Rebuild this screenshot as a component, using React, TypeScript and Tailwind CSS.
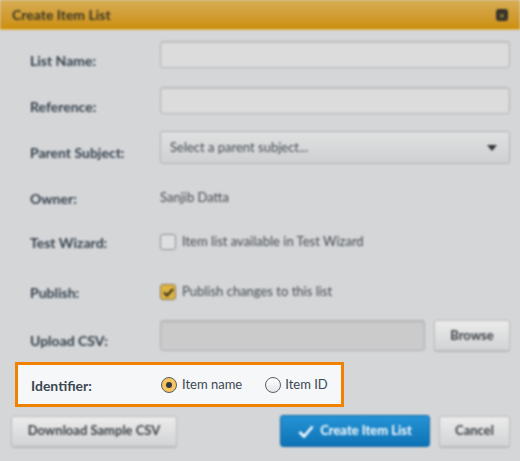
import React from "react";

const font = { fontFamily: "Lato, 'Open Sans', 'Liberation Sans', sans-serif" };

function Label({ children, pt = "pt-3" }: { children: React.ReactNode; pt?: string }) {
  return (
    <div className={`w-[130px] shrink-0 text-[14px] font-bold text-[#33404b] ${pt}`}>{children}</div>
  );
}

function Btn({ children, className = "" }: { children: React.ReactNode; className?: string }) {
  return (
    <div
      className={`flex items-center justify-center rounded-[3px] border border-[#b9bbbd] bg-gradient-to-b from-[#ececec] to-[#d2d3d5] text-[13px] font-bold text-[#3a3f44] shadow-[0_1px_1px_rgba(0,0,0,0.15)] ${className}`}
    >
      {children}
    </div>
  );
}

export default function App() {
  return (
    <div style={font} className="w-[520px] h-[461px] overflow-hidden bg-[#d5d6d8] flex flex-col">
      <div className="blur-[1.2px] flex flex-col">
        {/* Header */}
        <div className="h-[30px] flex items-center justify-between pl-3 pr-[12px] bg-gradient-to-b from-[#d7ad52] to-[#cc8f02] border-b border-[#e0b860]">
          <span className="text-[14px] font-bold text-[#3a3622]">Create Item List</span>
          <span className="w-[12px] h-[12px] rounded-[3px] bg-[#34322a] flex items-center justify-center text-[10px] leading-none text-[#b99040] font-bold">×</span>
        </div>
        <div className="flex flex-col pl-[30px] pr-[10px]">
          <div className="flex items-center h-[27px] mt-[11px]">
            <Label>List Name:</Label>
            <div className="flex-1 h-full rounded-[3px] border border-[#b3b5b8] bg-[#dcdcdc] shadow-[inset_0_1px_2px_rgba(0,0,0,0.1)]" />
          </div>
          <div className="flex items-center h-[27px] mt-[19px]">
            <Label>Reference:</Label>
            <div className="flex-1 h-full rounded-[3px] border border-[#b3b5b8] bg-[#dcdcdc] shadow-[inset_0_1px_2px_rgba(0,0,0,0.1)]" />
          </div>
          <div className="flex items-center h-[33px] mt-[17px]">
            <Label pt="pt-[9px]">Parent Subject:</Label>
            <div className="flex-1 h-full rounded-[3px] border border-[#b0b2b5] bg-gradient-to-b from-[#dfe0e0] to-[#d0d1d3] flex items-center justify-between pl-[9px] pr-[12px] text-[13px] text-[#444a50]">
              <span>Select a parent subject...</span>
              <svg width="10" height="6" viewBox="0 0 10 6"><path d="M0 0h10L5 6z" fill="#2f3337" /></svg>
            </div>
          </div>
          <div className="flex items-center h-[32px] mt-[18px]">
            <Label pt="pt-0">Owner:</Label>
            <span className="text-[13px] text-[#444a50]">Sanjib Datta</span>
          </div>
          <div className="flex items-center h-[32px] mt-[12px]">
            <Label pt="pt-0">Test Wizard:</Label>
            <div className="w-[16px] h-[16px] rounded-[3px] border border-[#8a8d91] bg-[#dedfe0] mr-[6px]" />
            <span className="text-[13px] text-[#444a50]">Item list available in Test Wizard</span>
          </div>
          <div className="flex items-center h-[32px] mt-[18px]">
            <Label pt="pt-0">Publish:</Label>
            <div className="w-[16px] h-[16px] rounded-[3px] border border-[#8a7a4a] bg-[#dfb342] mr-[6px] flex items-center justify-center">
              <svg width="11" height="9" viewBox="0 0 11 9"><path d="M1 4.5l3 3L10 1" stroke="#2d2a20" strokeWidth="2" fill="none" /></svg>
            </div>
            <span className="text-[13px] text-[#444a50]">Publish changes to this list</span>
          </div>
          <div className="flex items-center h-[31px] mt-[12px]">
            <Label pt="pt-[10px]">Upload CSV:</Label>
            <div className="w-[265px] h-full rounded-[3px] border border-[#b0b2b5] bg-[#cbcbcc] shadow-[inset_0_1px_2px_rgba(0,0,0,0.1)]" />
            <Btn className="ml-[9px] flex-1 h-[31px]">Browse</Btn>
          </div>
        </div>
      </div>

      {/* Identifier highlight */}
      <div className="mt-[11px] ml-[15px] w-[329px] h-[45px] border-[3px] border-[#f08200] bg-[#f6f7f9] flex items-center pl-[13px]">
        <div className="w-[130px] text-[14px] font-bold text-[#3b4852] pt-[2px]">Identifier:</div>
        <div className="flex items-center">
          <div className="w-[16px] h-[16px] rounded-full border border-[#5a5f66] bg-[#f7c660] flex items-center justify-center">
            <div className="w-[6px] h-[6px] rounded-full bg-[#333a42]" />
          </div>
          <span className="ml-[5px] text-[13px] text-[#3b4852]">Item name</span>
          <div className="ml-[23px] w-[16px] h-[16px] rounded-full border border-[#5a5f66] bg-gradient-to-b from-[#ffffff] to-[#e4e6e9]" />
          <span className="ml-[4px] text-[13px] text-[#3b4852]">Item ID</span>
        </div>
      </div>

      {/* Buttons */}
      <div className="blur-[1.2px] flex items-center mt-[8px] pl-[11px] pr-[10px] h-[32px]">
        <Btn className="w-[166px] h-[31px]">Download Sample CSV</Btn>
        <div className="ml-[103px] w-[150px] h-[32px] rounded-[3px] border border-[#0f6aa6] bg-gradient-to-b from-[#2594d6] to-[#0c72b5] flex items-center justify-center gap-[6px] text-[13px] font-bold text-white">
          <svg width="16" height="13" viewBox="0 0 16 13"><path d="M1.5 7l4.5 4.5L14.5 1.5" stroke="#fff" strokeWidth="2.6" fill="none" /></svg>
          <span>Create Item List</span>
        </div>
        <Btn className="ml-[9px] flex-1 h-[31px]">Cancel</Btn>
      </div>
    </div>
  );
}
